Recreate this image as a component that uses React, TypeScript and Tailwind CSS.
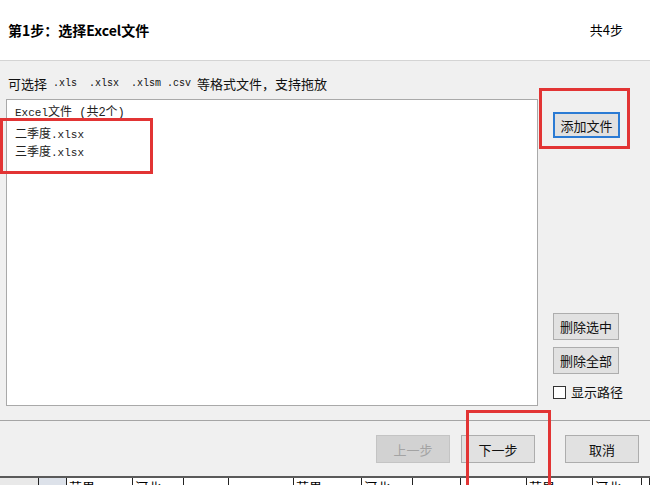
const cjk = { fontFamily: '"Noto Sans CJK SC", "Noto Sans", sans-serif' };
const mono = { fontFamily: '"Liberation Mono", "Noto Sans CJK SC", monospace' };

type BtnProps = {
  label: string;
  className?: string;
  disabled?: boolean;
  focused?: boolean;
};

function WinButton({ label, className = "", disabled, focused }: BtnProps) {
  let look = "bg-[#e1e1e1] border-[#adadad] text-[#111]";
  if (disabled) look = "bg-[#d2d2d2] border-[#c4c4c4] text-[#a3a3a3]";
  if (focused) look = "bg-[#e1e1e1] border-[#2b7bd4] border-2 text-[#111]";
  return (
    <div
      style={cjk}
      className={`flex items-center justify-center border text-[13px] leading-none ${look} ${className}`}
    >
      {label}
    </div>
  );
}

// sheet cells peeking out under the dialog
const strip = [
  { w: 39, t: "", bg: "bg-[#e9e9e9]" },
  { w: 28, t: "", bg: "bg-[#dde2ea]" },
  { w: 66, t: "苹果" },
  { w: 51, t: "河北" },
  { w: 45, t: "" },
  { w: 65, t: "" },
  { w: 68, t: "苹果" },
  { w: 51, t: "河北" },
  { w: 48, t: "" },
  { w: 66, t: "" },
  { w: 66, t: "苹果" },
  { w: 49, t: "河北" },
  { w: 8, t: "" },
];

export default function App() {
  return (
    <div className="relative flex h-[485px] w-[650px] flex-col overflow-hidden bg-[#f0f0f0]" style={cjk}>
      <div className="flex h-[61px] shrink-0 items-center justify-between border-b border-[#d4d4d4] bg-white pl-[8px] pr-[27px]">
        <span className="text-[14px] font-bold text-black">第1步：选择Excel文件</span>
        <span className="text-[13px] text-black">共4步</span>
      </div>

      <div className="flex h-[359px] shrink-0">
        <div className="w-[538px] shrink-0 pl-[6px]">
          <div className="mt-[14px] flex h-[18px] items-center pl-[2px] text-[13px] leading-[18px] text-[#111]">
            <span>可选择</span>
            <span style={mono} className="whitespace-pre text-[10px]"> .xls  .xlsx  .xlsm .csv </span>
            <span>等格式文件，支持拖放</span>
          </div>
          <div className="mt-[6px] h-[307px] border border-[#a9a9a9] bg-white pl-[8px] pt-[4px] text-[12px] leading-[18px] text-[#222]" style={mono}>
            <div>
              <span className="text-[11px]">Excel</span>文件 (共2个)
            </div>
            <div className="mt-[4px]">
              二季度<span className="text-[11px]">.xlsx</span>
            </div>
            <div>
              三季度<span className="text-[11px]">.xlsx</span>
            </div>
          </div>
        </div>

        <div className="flex flex-1 flex-col items-start pl-[15px]">
          <WinButton label="添加文件" focused className="mt-[51px] h-[26px] w-[67px]" />
          <WinButton label="删除选中" className="mt-[175px] h-[27px] w-[66px]" />
          <WinButton label="删除全部" className="mt-[7px] h-[27px] w-[66px]" />
          <label className="mt-[10px] flex h-[16px] items-center gap-[5px] text-[13px] text-[#111]">
            <span className="h-[13px] w-[13px] border border-[#333] bg-white" />
            显示路径
          </label>
        </div>
      </div>

      <div className="flex h-[56px] shrink-0 items-start justify-end border-t border-[#a5a5a5] pr-[11px] pt-[14px]">
        <WinButton label="上一步" disabled className="h-[28px] w-[74px]" />
        <WinButton label="下一步" className="ml-[11px] h-[28px] w-[74px]" />
        <WinButton label="取消" className="ml-[30px] h-[28px] w-[74px]" />
      </div>

      <div className="flex h-[9px] shrink-0 overflow-hidden border-t-2 border-[#5a5a5a] bg-white">
        {strip.map((c, i) => (
          <div
            key={i}
            style={{ width: c.w }}
            className={`shrink-0 border-r border-[#222] pl-[2px] pt-[1px] text-[13px] leading-[16px] text-black ${c.bg ?? ""}`}
          >
            {c.t}
          </div>
        ))}
      </div>

      {/* red highlight frames */}
      <div className="absolute left-0 top-[118px] h-[56px] w-[153px] border-[3px] border-[#e23434]" />
      <div className="absolute left-[539px] top-[88px] h-[61px] w-[91px] border-[3px] border-[#e23434]" />
      <div className="absolute left-[466px] top-[410px] h-[78px] w-[85px] border-[3px] border-[#e23434]" />
    </div>
  );
}
